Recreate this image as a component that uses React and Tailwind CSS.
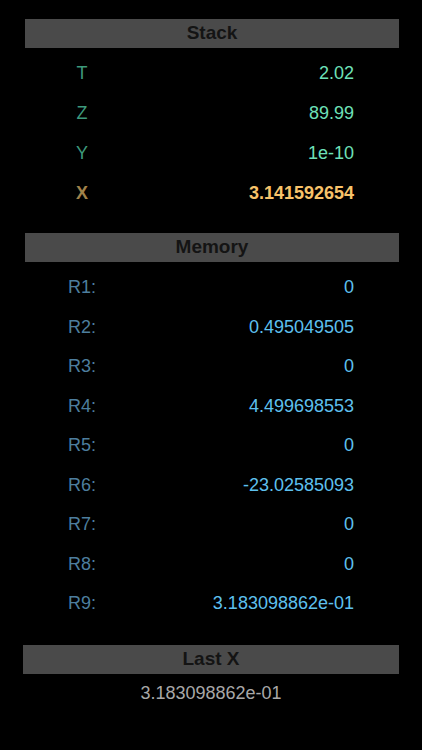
import React from "react";

const font = { fontFamily: '"Liberation Sans", Arial, sans-serif' };

function Bar({ children, className = "" }) {
  return (
    <div className={`h-[29px] bg-[#4a4a4a] flex items-center justify-center text-[19px] font-bold text-[#141414] ${className}`}>
      {children}
    </div>
  );
}

const stack = [
  ["T", "2.02"],
  ["Z", "89.99"],
  ["Y", "1e-10"],
];

const mem = [
  ["R1:", "0"],
  ["R2:", "0.495049505"],
  ["R3:", "0"],
  ["R4:", "4.499698553"],
  ["R5:", "0"],
  ["R6:", "-23.02585093"],
  ["R7:", "0"],
  ["R8:", "0"],
  ["R9:", "3.183098862e-01"],
];

export default function App() {
  return (
    <div className="w-[422px] h-[750px] bg-black overflow-hidden" style={font}>
      <div className="pt-[19px]">
        <Bar className="ml-[25px] mr-[23px]">Stack</Bar>
        <div className="ml-[25px] mr-[23px] pt-[5px]">
          {stack.map(([l, v]) => (
            <div key={l} className="h-[40px] flex items-center text-[18px] pl-[37px] pr-[45px]">
              <span className="w-[40px] text-center text-[#3d9a7c]">{l}</span>
              <span className="flex-1 text-right text-[#6ee0b8]">{v}</span>
            </div>
          ))}
          <div className="h-[40px] flex items-center text-[18px] font-bold pl-[37px] pr-[45px]">
            <span className="w-[40px] text-center text-[#a0824a]">X</span>
            <span className="flex-1 text-right text-[#f8c36a]">3.141592654</span>
          </div>
        </div>
        <Bar className="ml-[25px] mr-[23px] mt-[20px]">Memory</Bar>
        <div className="ml-[25px] mr-[23px] pt-[6px]">
          {mem.map(([l, v]) => (
            <div key={l} className="h-[39.5px] flex items-center text-[18px] pl-[43px] pr-[45px]">
              <span className="text-[#4d7e9e]">{l}</span>
              <span className="flex-1 text-right text-[#5ec0ef]">{v}</span>
            </div>
          ))}
        </div>
        <Bar className="ml-[23px] mr-[23px] mt-[21px] h-[27px]">Last X</Bar>
        <div className="h-[40px] flex items-center justify-center text-[18px] text-[#a8a8a8]">
          3.183098862e-01
        </div>
      </div>
    </div>
  );
}
